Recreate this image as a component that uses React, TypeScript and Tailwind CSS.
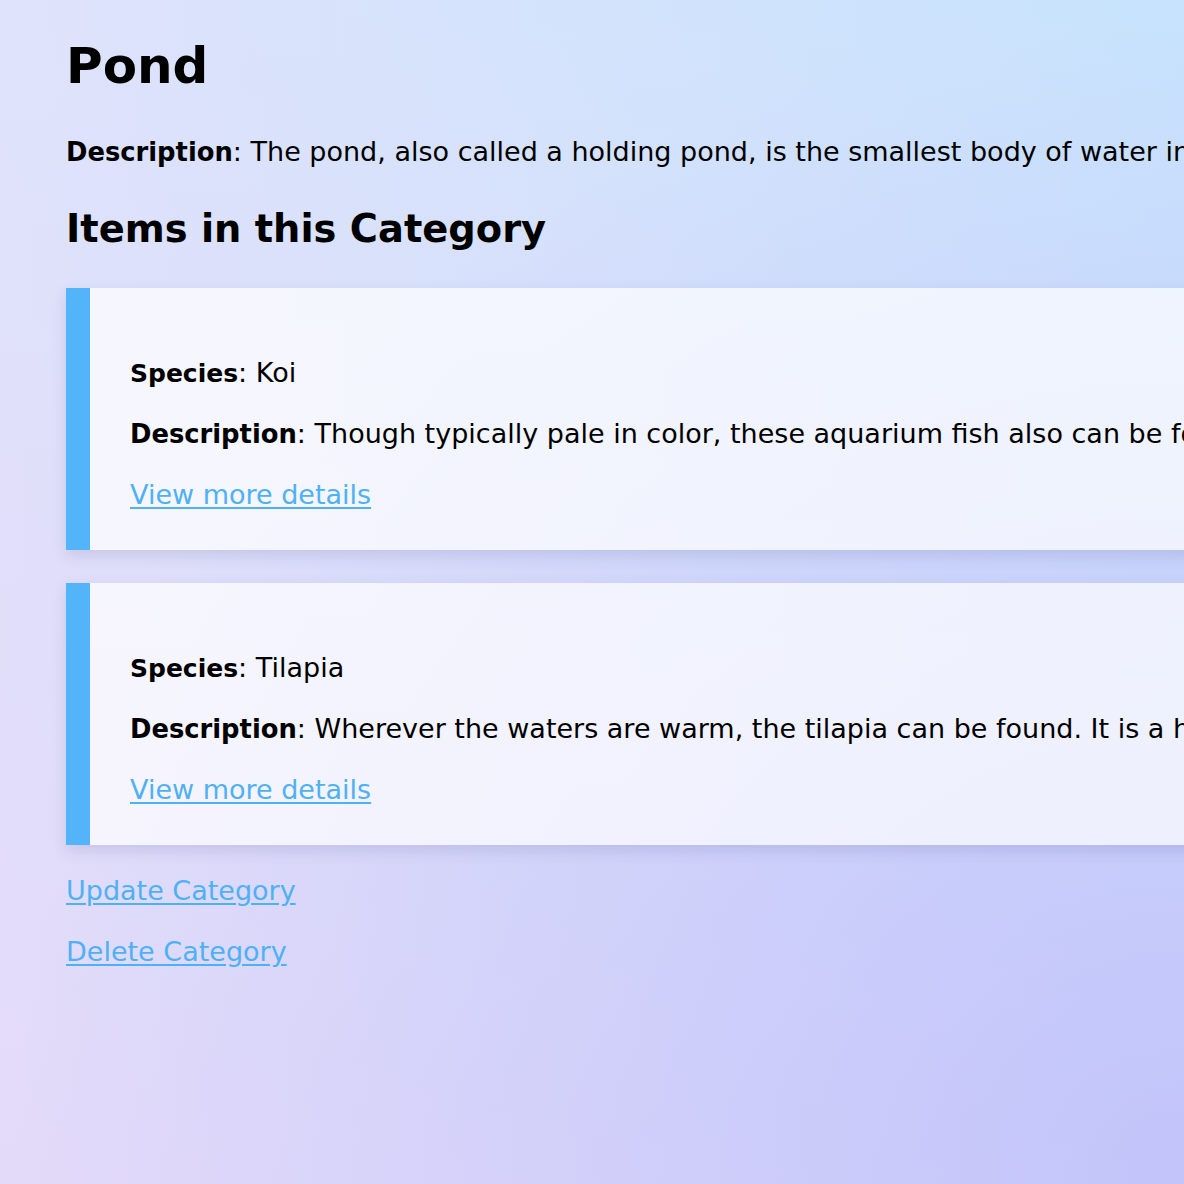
const items = [
  {
    species: 'Koi',
    description:
      'Though typically pale in color, these aquarium fish also can be found in bright shades of orange, red and gold.',
  },
  {
    species: 'Tilapia',
    description:
      'Wherever the waters are warm, the tilapia can be found. It is a hardy fish that thrives in shallow ponds.',
  },
]

export default function App() {
  return (
    <div
      className="min-h-[1184px] w-[1184px] overflow-hidden whitespace-nowrap bg-[radial-gradient(ellipse_at_100%_100%,rgba(175,178,250,0.55)_0%,rgba(175,178,250,0)_70%),linear-gradient(to_bottom,rgba(230,212,248,0)_0%,rgba(230,212,248,0.6)_100%),linear-gradient(to_right,#dfe3fb,#c7e3fd)] pl-[66px] pt-[36px] text-[27px] leading-[37px] text-black"
      style={{ fontFamily: '"DejaVu Sans", "Liberation Sans", sans-serif' }}
    >
      <h1 className="text-[50px] font-bold leading-[60px]">Pond</h1>
      <p className="mt-[37px] h-[37px]">
        <b className="text-[25.8px] leading-none">Description</b>: The pond, also called a holding pond, is the
        smallest body of water in the whole fishery.
      </p>
      <h2 className="mt-[36px] h-[46px] text-[38.4px] font-bold leading-[46px]">Items in this Category</h2>

      <div className="mt-[36px] flex w-[1400px] flex-col gap-[33px]">
        {items.map((item) => (
          <div key={item.species} className="flex bg-white/70 shadow-[0_6px_14px_rgba(60,60,120,0.14)]">
            <div className="w-6 flex-none bg-[#53b4fa]" />
            <div className="flex flex-col gap-6 pb-[37px] pl-10 pt-[66px]">
              <p className="h-[37px]">
                <b className="text-[25px] leading-none">Species</b>: {item.species}
              </p>
              <p className="h-[37px]">
                <b className="text-[25.8px] leading-none">Description</b>: {item.description}
              </p>
              <a href="#" className="h-[37px] self-start text-[#4fb1f5] underline underline-offset-[3px]">
                View more details
              </a>
            </div>
          </div>
        ))}
      </div>

      <div className="mt-[27px] flex flex-col items-start gap-6">
        <a href="#" className="text-[#4fb1f5] underline underline-offset-[3px]">
          Update Category
        </a>
        <a href="#" className="text-[#4fb1f5] underline underline-offset-[3px]">
          Delete Category
        </a>
      </div>
    </div>
  )
}
